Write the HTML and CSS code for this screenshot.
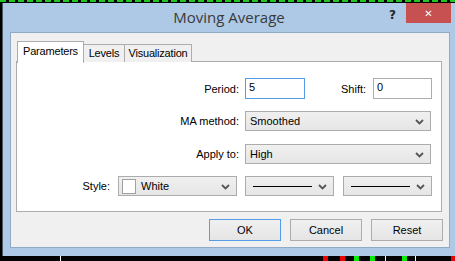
FILE: index.html
```html
<!DOCTYPE html>
<html lang="en">

<head>
    <meta charset="UTF-8">
    <title>Moving Average</title>
    <link rel="stylesheet" href="styles.css">
</head>

<body>
    <div class="chart">
        <div class="chart-top"></div>
        <div class="window">
            <div class="titlebar">
                <span class="title">Moving Average</span>
                <span class="help">?</span>
                <span class="close">&#x2715;</span>
            </div>
            <div class="client">
                <div class="tabs">
                    <div class="tab active">Parameters</div>
                    <div class="tab levels">Levels</div>
                    <div class="tab visual">Visualization</div>
                </div>
                <div class="panel">
                    <div class="row row-period">
                        <label class="label">Period:</label>
                        <div class="input focus">5</div>
                        <label class="label shift-label">Shift:</label>
                        <div class="input shift">0</div>
                    </div>
                    <div class="row">
                        <label class="label">MA method:</label>
                        <div class="select wide">Smoothed<svg class="arrow" width="9" height="6" viewBox="0 0 9 6"><polyline points="1,1 4.5,4.5 8,1" fill="none" stroke="#555" stroke-width="1.8"/></svg></div>
                    </div>
                    <div class="row">
                        <label class="label">Apply to:</label>
                        <div class="select wide">High<svg class="arrow" width="9" height="6" viewBox="0 0 9 6"><polyline points="1,1 4.5,4.5 8,1" fill="none" stroke="#555" stroke-width="1.8"/></svg></div>
                    </div>
                    <div class="row">
                        <label class="label style-label">Style:</label>
                        <div class="select color"><span class="swatch"></span>White<svg class="arrow" width="9" height="6" viewBox="0 0 9 6"><polyline points="1,1 4.5,4.5 8,1" fill="none" stroke="#555" stroke-width="1.8"/></svg></div>
                        <div class="select line"><span class="stroke"></span><svg class="arrow" width="9" height="6" viewBox="0 0 9 6"><polyline points="1,1 4.5,4.5 8,1" fill="none" stroke="#555" stroke-width="1.8"/></svg></div>
                        <div class="select line"><span class="stroke"></span><svg class="arrow" width="9" height="6" viewBox="0 0 9 6"><polyline points="1,1 4.5,4.5 8,1" fill="none" stroke="#555" stroke-width="1.8"/></svg></div>
                    </div>
                </div>
                <div class="buttons">
                    <button class="default">OK</button>
                    <button>Cancel</button>
                    <button>Reset</button>
                </div>
            </div>
        </div>
        <div class="chart-bottom">
            <span class="candle red" style="left: 323px"></span>
            <span class="candle red" style="left: 340px"></span>
            <span class="candle green" style="left: 354px"></span>
            <span class="candle green" style="left: 370px"></span>
            <span class="candle white" style="left: 385px"></span>
            <span class="candle green" style="left: 402px"></span>
            <span class="candle white" style="left: 415px"></span>
            <span class="candle red" style="left: 451px"></span>
            <span class="candle white" style="left: 60px"></span>
        </div>
    </div>
</body>
</html>
```

FILE: styles.css
```css
body {
    margin: 0;
    padding: 0;
    background-color: #000;
    font-family: "Liberation Sans", Arial, sans-serif;
    font-size: 11px;
    color: #000;
    overflow: hidden;
}

.chart {
    width: 455px;
    height: 261px;
    position: relative;
    overflow: hidden;
}

.chart-top {
    height: 3px;
    background: repeating-linear-gradient(90deg, #22c422 0 6px, #000 6px 9px) top / 100% 2px no-repeat;
}

.window {
    height: 253px;
    margin-left: 2px;
    border-left: 1px solid #4a5866;
    background-color: #adc9e6;
    box-sizing: border-box;
}

/* title bar */
.titlebar {
    height: 29px;
    position: relative;
    display: flex;
    justify-content: center;
    align-items: center;
}

.title {
    font-family: "Open Sans", "Noto Sans", sans-serif;
    font-size: 15px;
    color: #3a3a3a;
    margin-top: -1px;
}

.help {
    position: absolute;
    left: 386px;
    top: 5px;
    font-family: "DejaVu Sans", sans-serif;
    font-weight: bold;
    font-size: 12px;
    color: #222;
}

.close {
    position: absolute;
    left: 403px;
    top: 0;
    width: 45px;
    height: 20px;
    background-color: #c75050;
    color: #fff;
    font-family: "DejaVu Sans", sans-serif;
    font-weight: bold;
    font-size: 10px;
    display: flex;
    justify-content: center;
    align-items: center;
}

/* client area */
.client {
    width: 440px;
    height: 216px;
    margin-left: 7px;
    box-sizing: border-box;
    border: 1px solid #8fa9c6;
    background-color: #f0f0f0;
    padding: 8px 0 0 5px;
}

.tabs {
    display: flex;
    align-items: flex-end;
    height: 21px;
    margin-left: 1px;
    position: relative;
    z-index: 1;
}

.tab {
    height: 18px;
    box-sizing: border-box;
    border: 1px solid #adadad;
    border-bottom: none;
    background-color: #f0f0f0;
    padding-top: 2px;
    margin-left: -1px;
    text-align: center;
    letter-spacing: -0.2px;
}

.tab.active {
    width: 67px;
    height: 22px;
    margin-left: 0;
    margin-bottom: -1px;
    background-color: #fff;
    padding-top: 3px;
}

.tab.levels {
    width: 42px;
}

.tab.visual {
    width: 68px;
}

.panel {
    width: 426px;
    height: 151px;
    box-sizing: border-box;
    border: 1px solid #adadad;
    background-color: #fff;
    margin-top: -1px;
    padding-top: 16px;
}

.row {
    display: flex;
    align-items: center;
    height: 20px;
    margin-bottom: 12.5px;
}

.row-period {
    height: 21px;
    margin-bottom: 12px;
}

.label {
    width: 222px;
    text-align: right;
    margin-right: 6px;
}

.shift-label {
    width: auto;
    margin-left: 36px;
    margin-right: 7px;
}

.style-label {
    width: 93px;
    margin-right: 8px;
}

.input {
    width: 60px;
    height: 21px;
    box-sizing: border-box;
    border: 1px solid #abadb3;
    padding: 2px 0 0 3px;
    background-color: #fff;
}

.input.focus {
    border-color: #569de5;
}

.input.shift {
    width: 59px;
}

.select {
    height: 20px;
    box-sizing: border-box;
    border: 1px solid #acacac;
    background: linear-gradient(#f0f0f0, #e6e6e6);
    display: flex;
    align-items: center;
    padding-left: 4px;
    position: relative;
}

.select.wide {
    width: 186px;
}

.select.color {
    width: 119px;
    margin-right: 8px;
    padding-left: 3px;
}

.select.line {
    width: 89px;
    margin-right: 9px;
}

.arrow {
    position: absolute;
    right: 6px;
    top: 7px;
}

.swatch {
    width: 14px;
    height: 15px;
    box-sizing: border-box;
    border: 1px solid #a0a0a0;
    background-color: #fff;
    margin-right: 5px;
}

.stroke {
    width: 59px;
    height: 1px;
    background-color: #000;
    margin-left: 3px;
}

/* dialog buttons */
.buttons {
    display: flex;
    justify-content: flex-end;
    margin-top: 7px;
    margin-right: 6px;
}

button {
    width: 72px;
    height: 22px;
    margin-left: 9px;
    border: 1px solid #acacac;
    background: linear-gradient(#f0f0f0, #e5e5e5);
    font-family: "Liberation Sans", Arial, sans-serif;
    font-size: 11px;
    color: #000;
    padding: 0;
}

button.default {
    border-color: #569de5;
}

/* chart candles below the dialog */
.chart-bottom {
    height: 5px;
}

.candle {
    position: absolute;
    bottom: 0;
    width: 5px;
    height: 5px;
}

.candle.red {
    background-color: #e00;
}

.candle.green {
    background-color: #0e0;
}

.candle.white {
    width: 1px;
    background-color: #fff;
}
```
